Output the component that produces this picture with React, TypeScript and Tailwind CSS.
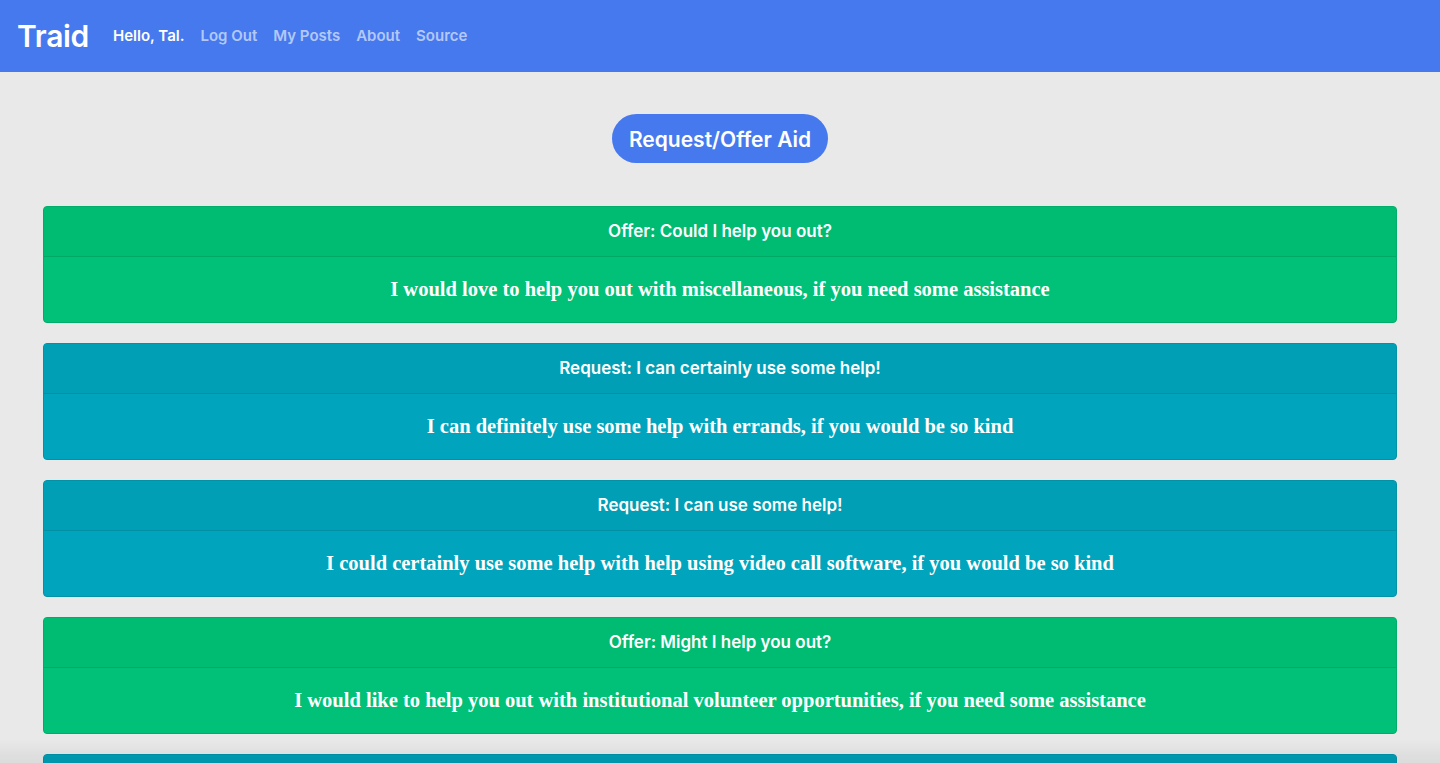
import React from "react";

const posts = [
  { type: "offer", title: "Offer: Could I help you out?", body: "I would love to help you out with miscellaneous, if you need some assistance" },
  { type: "request", title: "Request: I can certainly use some help!", body: "I can definitely use some help with errands, if you would be so kind" },
  { type: "request", title: "Request: I can use some help!", body: "I could certainly use some help with help using video call software, if you would be so kind" },
  { type: "offer", title: "Offer: Might I help you out?", body: "I would like to help you out with institutional volunteer opportunities, if you need some assistance" },
  { type: "request", title: "Request: I can use some help!", body: "I could use some help with groceries, if you would be so kind" },
];

export default function App() {
  return (
    <div className="min-h-screen bg-[#e9e9e9] text-white" style={{ fontFamily: "Inter, 'Noto Sans', sans-serif" }}>
      <nav className="h-[72px] bg-[#4679ee] flex items-center pl-[17px] gap-4">
        <span className="text-[30px] font-semibold tracking-[-0.3px] mr-2">Traid</span>
        <span className="text-[15px] font-semibold">Hello, Tal.</span>
        <span className="text-[15px] font-semibold text-white/60">Log Out</span>
        <span className="text-[15px] font-semibold text-white/60">My Posts</span>
        <span className="text-[15px] font-semibold text-white/60">About</span>
        <span className="text-[15px] font-semibold text-white/60">Source</span>
      </nav>
      <div className="flex justify-center pt-[42px] pb-[43px]">
        <button className="h-[49px] w-[216px] rounded-full bg-[#4679ee] text-[21px] font-semibold text-white pt-[2px]">Request/Offer Aid</button>
      </div>
      <div className="flex flex-col gap-5 px-[43px]">
        {posts.map((p, i) => {
          const offer = p.type === "offer";
          return (
            <div
              key={i}
              className={`rounded-[4px] border overflow-hidden ${offer ? "bg-[#00c177] border-[#00ad6a]" : "bg-[#00a5bd] border-[#0093a8]"}`}
            >
              <div className={`h-[50px] flex items-center justify-center text-[17px] font-semibold border-b pt-[1px] ${offer ? "bg-[#00bb72] border-[#00a866]" : "bg-[#009fb6] border-[#008fa3]"}`}>
                {p.title}
              </div>
              <div className="h-[65px] flex items-center justify-center text-[20.5px] font-bold" style={{ fontFamily: "'Liberation Serif', Georgia, serif" }}>
                {p.body}
              </div>
            </div>
          );
        })}
      </div>
      <div className="fixed left-0 right-0 bottom-0 h-[24px] pointer-events-none bg-gradient-to-b from-transparent to-black/[0.06]" />
    </div>
  );
}
